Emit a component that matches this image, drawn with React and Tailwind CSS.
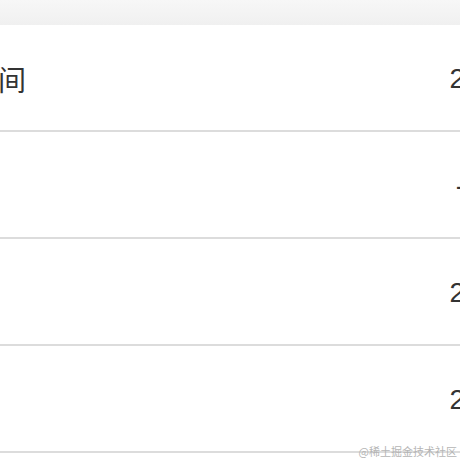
export default function App() {
    const rows = [
        { label: "间", value: "2" },
        { label: "", value: "-" },
        { label: "", value: "2" },
        { label: "", value: "2" },
    ];

    return (
        <div className="relative w-[460px] h-[460px] overflow-hidden bg-white" style={{ fontFamily: '"Noto Sans CJK SC", "Noto Sans", sans-serif' }}>
            {/* верхняя серая полоса */}
            <div className="h-[25px] bg-gradient-to-b from-[#f7f7f7] to-[#f0f0f0]" />

            {rows.map((row, i) => (
                <div key={i} className="h-[107px] flex items-center justify-between border-b-2 border-[#dcdcdc] text-[28px] text-[#333] pt-[2px]">
                    <span className="-ml-[2px] leading-none">{row.label}</span>
                    <span className="mr-[-5px] leading-none font-['Liberation_Sans']">{row.value}</span>
                </div>
            ))}

            {/* водяной знак */}
            <div className="absolute right-[3px] bottom-[3px] text-[11px] leading-none text-[#b5b5b5]">
                @稀土掘金技术社区
            </div>
        </div>
    );
}
